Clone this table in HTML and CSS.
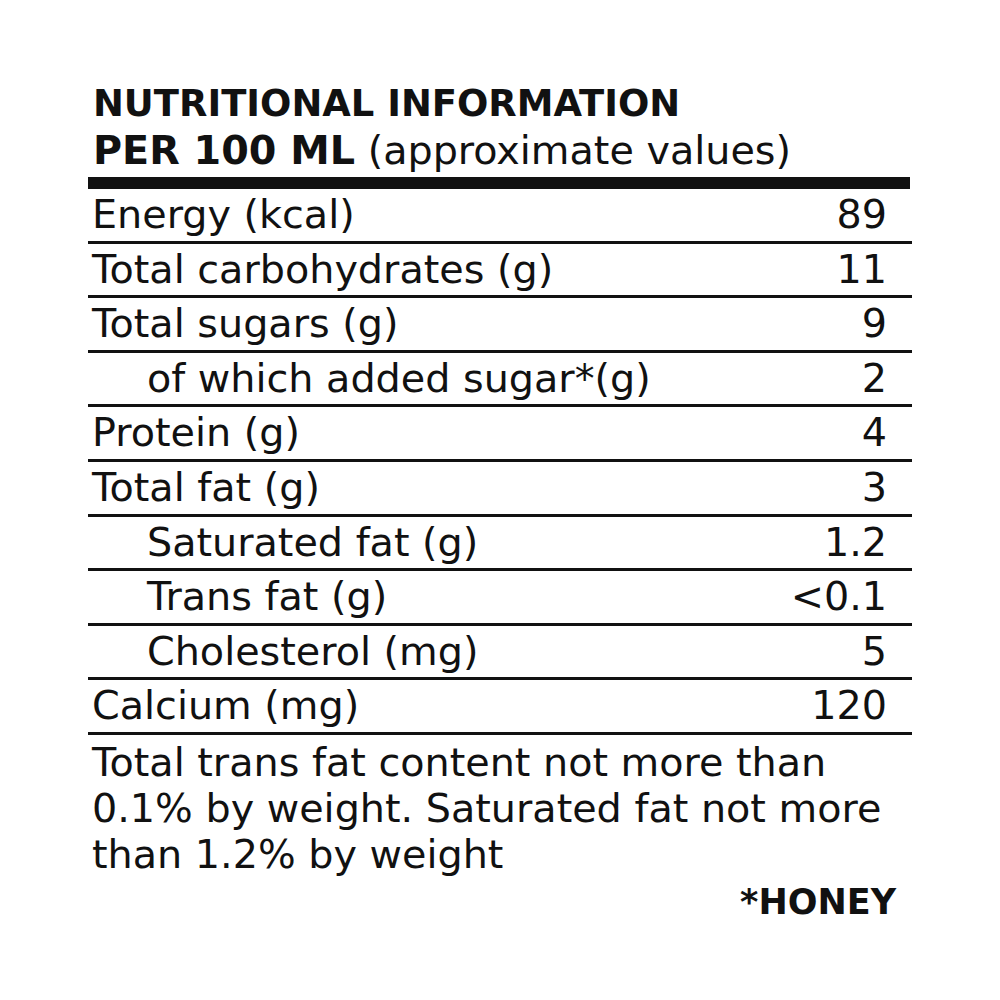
FILE: index.html
```html
<!DOCTYPE html>
<html>
<head>
<meta charset="utf-8">
<link rel="stylesheet" href="styles.css">
</head>
<body>
<div class="label">
  <div class="head">
    <div class="head-line1">NUTRITIONAL INFORMATION</div>
    <div class="head-line2"><b>PER 100 ML</b> (approximate values)</div>
  </div>
  <div class="bar"></div>
  <div class="rows">
    <div class="row"><span>Energy (kcal)</span><span>89</span></div>
    <div class="row"><span>Total carbohydrates (g)</span><span>11</span></div>
    <div class="row"><span>Total sugars (g)</span><span>9</span></div>
    <div class="row sub"><span>of which added sugar*(g)</span><span>2</span></div>
    <div class="row"><span>Protein (g)</span><span>4</span></div>
    <div class="row"><span>Total fat (g)</span><span>3</span></div>
    <div class="row sub"><span>Saturated fat (g)</span><span>1.2</span></div>
    <div class="row sub"><span>Trans fat (g)</span><span>&lt;0.1</span></div>
    <div class="row sub"><span>Cholesterol (mg)</span><span>5</span></div>
    <div class="row"><span>Calcium (mg)</span><span>120</span></div>
  </div>
  <p class="note">Total trans fat content not more than 0.1% by weight. Saturated fat not more than 1.2% by weight</p>
  <div class="honey">*HONEY</div>
</div>
</body>
</html>
```

FILE: styles.css
```css
html, body {
  margin: 0;
  padding: 0;
  background: #fff;
}
body {
  font-family: "DejaVu Sans", "Liberation Sans", sans-serif;
  color: #111;
}
.label {
  width: 824px;
  margin-left: 88px;
  padding-top: 81px;
}
.head {
  line-height: 46px;
  padding-left: 5px;
}
.head-line1 {
  font-weight: bold;
  font-size: 36.9px;
}
.head-line2 {
  font-size: 39.7px;
}
.head-line2 b {
  font-weight: bold;
}
.bar {
  height: 12px;
  width: 822px;
  background: #111;
  margin-top: 4px;
}
.row {
  display: flex;
  justify-content: space-between;
  align-items: center;
  height: 51.6px;
  font-size: 39.7px;
  line-height: 51.6px;
  border-bottom: 3px solid #111;
  padding-left: 4px;
  padding-right: 25px;
}
.row.sub {
  padding-left: 59px;
}
.note {
  margin: 4px 0 0 0;
  font-size: 39.7px;
  line-height: 46px;
  padding-left: 4px;
  padding-right: 10px;
}
.honey {
  text-align: right;
  font-weight: bold;
  font-size: 35px;
  line-height: 46px;
  margin-top: 2px;
  padding-right: 16px;
}
```
